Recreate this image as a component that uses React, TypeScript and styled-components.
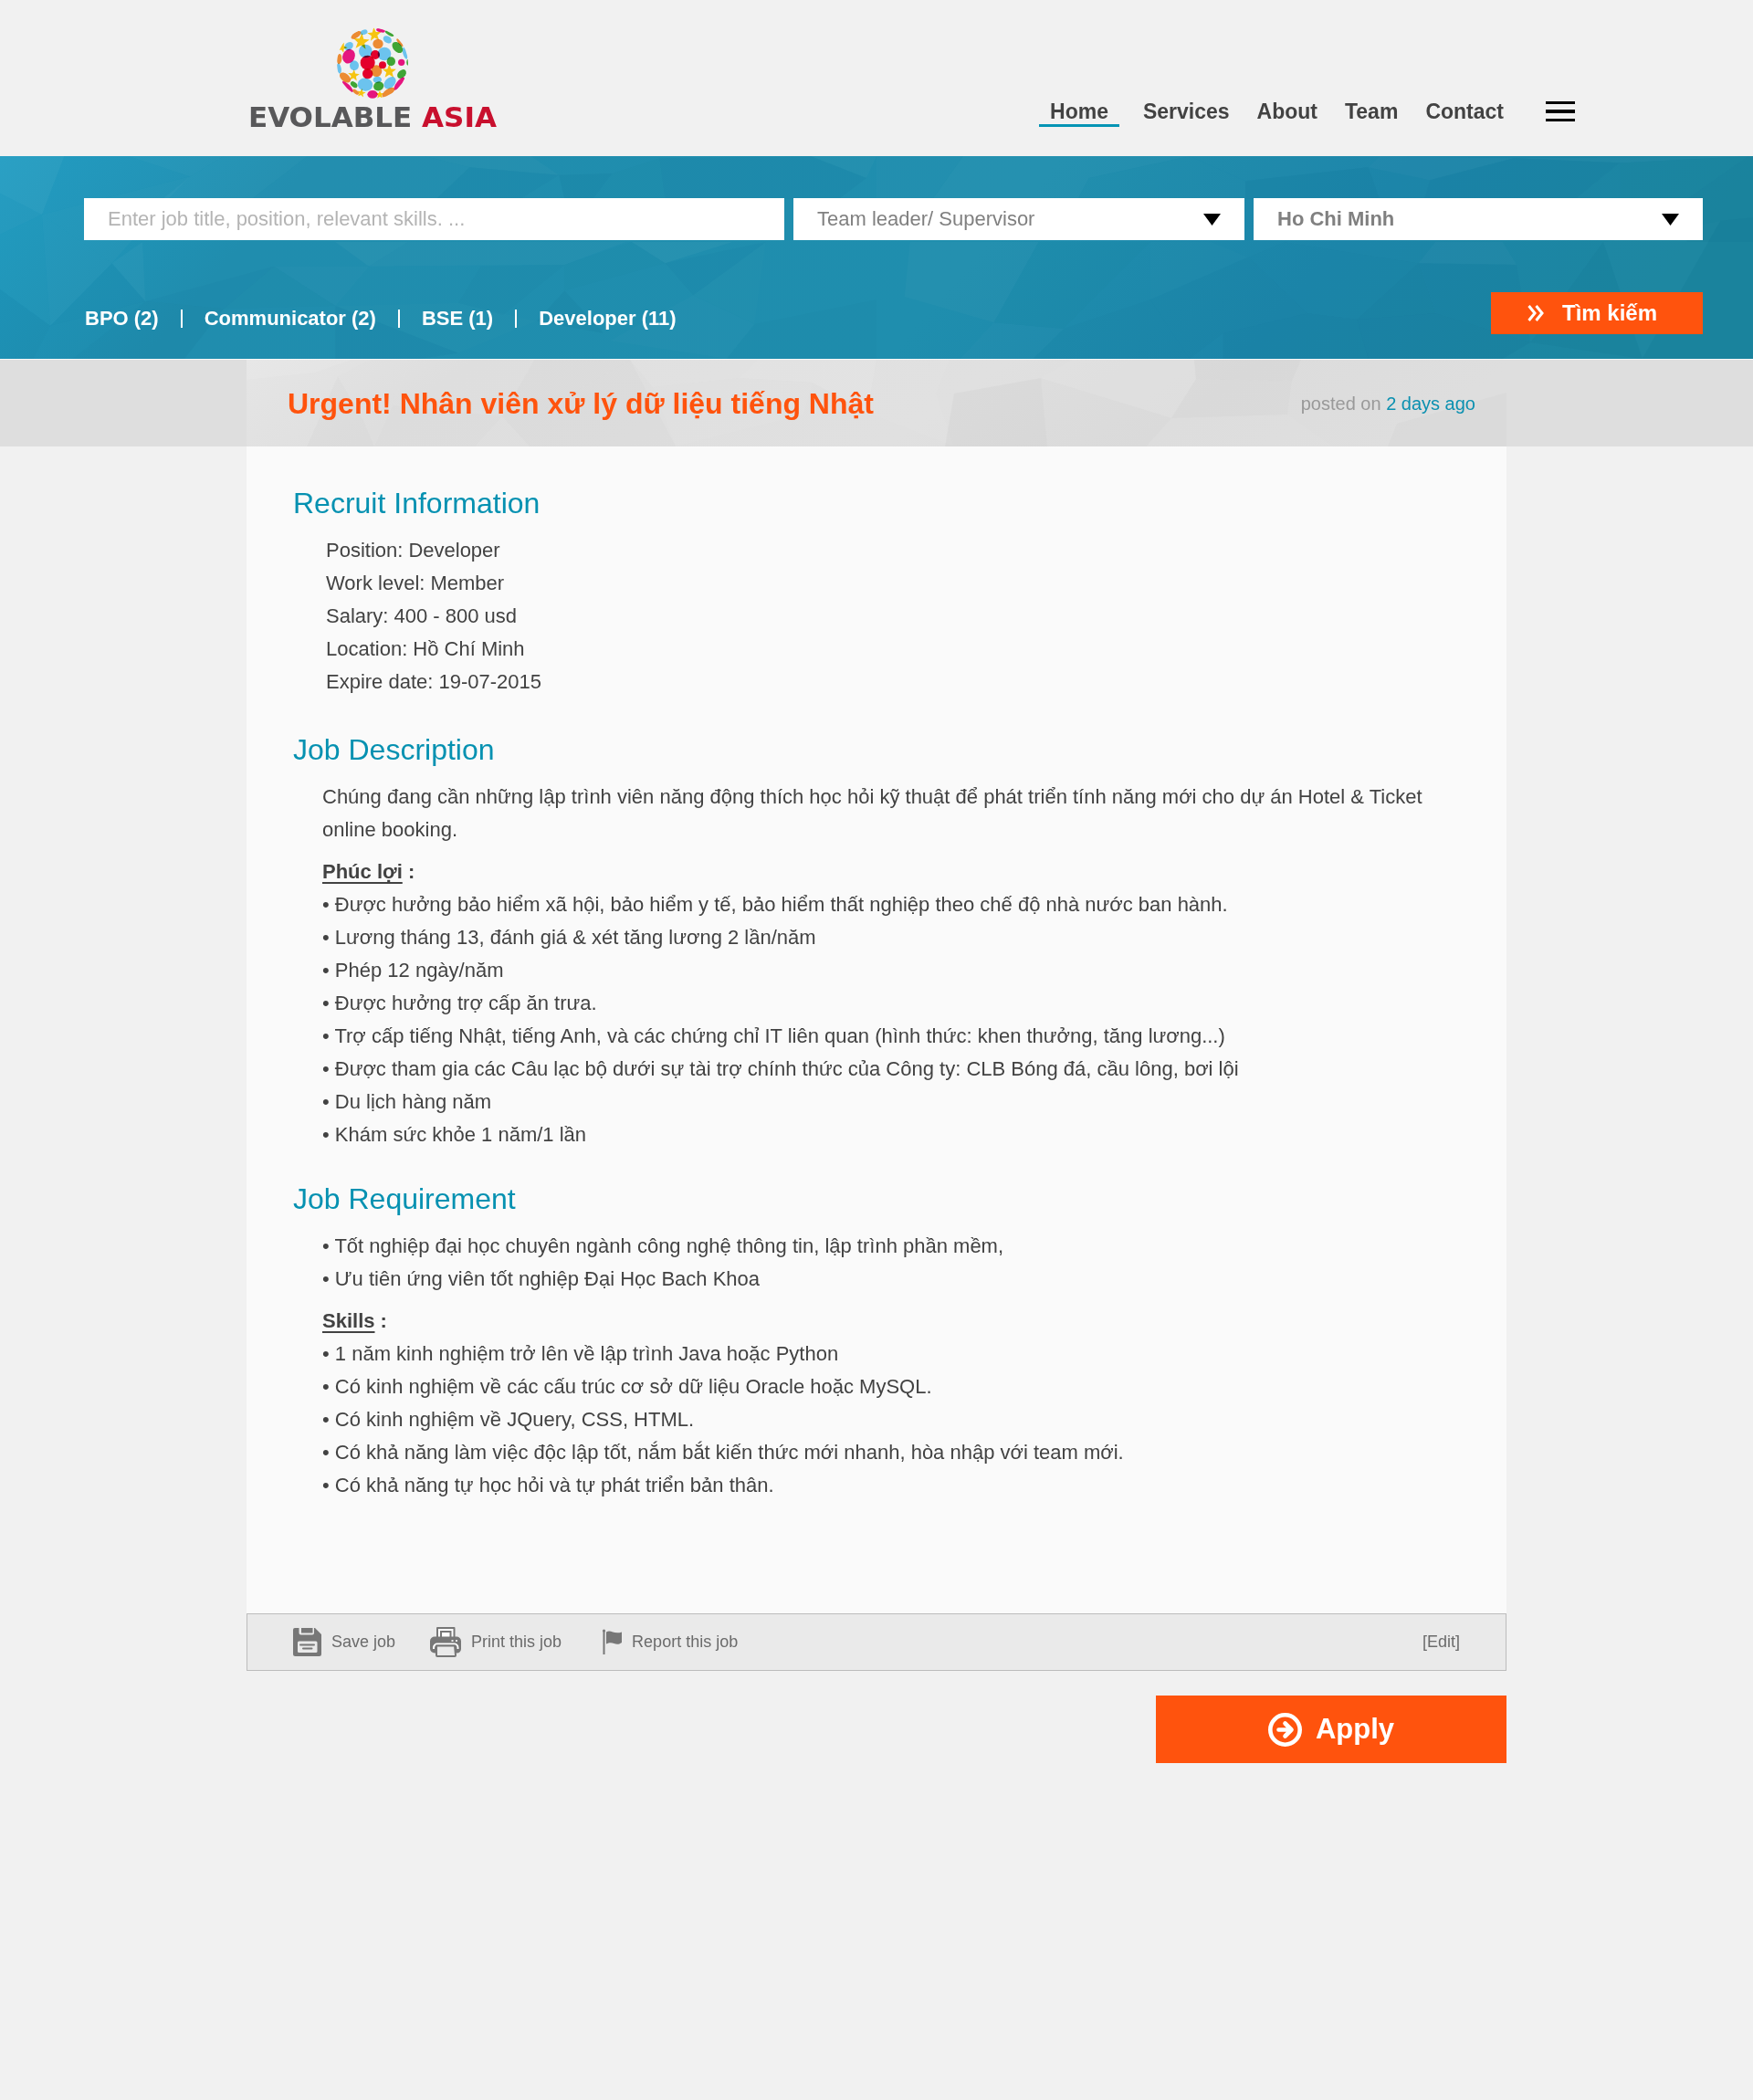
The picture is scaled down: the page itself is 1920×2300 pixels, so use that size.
import React from "react";
import styled, { createGlobalStyle } from "styled-components";

const GlobalStyle = createGlobalStyle`
  *, *::before, *::after { box-sizing: border-box; }
  body {
    margin: 0;
    background: #f1f1f1;
    color: #424242;
    font-family: "Liberation Sans", Arial, Helvetica, sans-serif;
    font-size: 22px;
    line-height: 36px;
  }
  h1, h2, h3, p, ul, dl, dd { margin: 0; padding: 0; }
  ul { list-style: none; }
  a { color: inherit; text-decoration: none; }
  button, input, select { font: inherit; border: 0; border-radius: 0; margin: 0; cursor: pointer; }
`;

/* ---------- header ---------- */

const Header = styled.header`
  display: flex;
  align-items: flex-end;
  justify-content: space-between;
  padding: 30px 195px 32px 272px;
`;

const Logo = styled.a`
  display: flex;
  flex-direction: column;
  align-items: center;
  gap: 8px;
`;

const Globe = styled.svg`
  width: 80px;
  height: 79px;
  isolation: isolate;

  g g > * { mix-blend-mode: multiply; }
`;

const Wordmark = styled.span`
  font: bold 31px/22px "DejaVu Sans", sans-serif;
  color: #58585a;
  white-space: nowrap;
`;

const WordmarkAccent = styled.span`
  color: #c8102e;
`;

const Nav = styled.nav`
  display: flex;
  align-items: flex-end;
  gap: 46px;
`;

const NavList = styled.ul`
  display: flex;
  gap: 30px;
`;

const NavLink = styled.a<{ $active?: boolean }>`
  display: block;
  padding: ${(p) => (p.$active ? "0 12px" : "0")};
  margin-right: ${(p) => (p.$active ? "-4px" : "0")};
  border-bottom: 3px solid ${(p) => (p.$active ? "#0494b4" : "transparent")};
  font-size: 23px;
  font-weight: bold;
  line-height: 28px;
`;

const MenuButton = styled.button`
  display: flex;
  align-items: center;
  width: 32px;
  height: 34px;
  padding: 0;
  background: none;
`;

/* ---------- faceted backdrop ---------- */

const Backdrop = styled.svg`
  position: absolute;
  inset: 0;
  width: 100%;
  height: 100%;
  z-index: -1;
`;

const FACETS: Array<[string, number]> = [
  ["0,18 115,18 75,210 0,140", 9],
  ["115,18 230,18 340,85 75,210", 3],
  ["230,18 400,18 340,85", 6],
  ["400,18 550,18 450,160 290,160 340,85", 5],
  ["340,85 75,210 200,370 300,160", 4],
  ["0,140 75,210 0,275", 5],
  ["75,210 0,275 0,455 90,575", 2],
  ["75,210 200,370 90,575", 4],
  ["200,370 255,300 260,495", 5],
  ["200,370 260,495 90,575", -4],
  ["90,575 260,495 130,684 60,684", -3],
  ["0,455 90,575 60,684 0,684", -5],
  ["260,300 455,300 490,380 260,495", 1],
  ["260,495 490,380 400,520", -4],
  ["260,495 400,520 330,684 130,684", -6],
  ["490,380 660,380 600,510", 3],
  ["490,380 600,510 400,520", -2],
  ["600,300 730,300 660,380", 6],
  ["550,18 760,18 840,55 780,160 450,160", 3],
  ["760,18 950,18 1000,80 840,55", 4],
  ["840,55 1000,80 930,160 780,160", -4],
  ["1000,80 1095,75 1060,160 1010,160", -7],
  ["1095,75 1180,25 1190,160 1060,160", -2],
  ["1180,25 1450,18 1550,90 1500,160 1190,160", -5],
  ["1450,18 1568,18 1550,90", 4],
  ["730,300 1120,300 1010,375 660,380", 4],
  ["660,380 860,380 820,500 600,510", 1],
  ["860,380 1010,375 900,540 820,500", -3],
  ["1130,300 1190,370 1010,460 1010,375", -2],
  ["1190,370 1310,300 1130,300", 6],
  ["1190,370 1370,300 1240,475", -4],
  ["1240,475 1350,570 1370,300", 2],
  ["1010,460 1080,600 960,560", -6],
  ["600,510 820,665 750,684 600,684", -5],
  ["820,500 960,560 820,665 600,510", 2],
  ["1090,625 1240,475 1350,570 1300,684", 3],
  ["1350,570 1568,490 1568,684 1300,684", -3],
  ["1370,300 1568,300 1568,490 1350,570", 1],
  ["1568,18 1723,18 1668,160 1568,160", 3],
  ["1723,18 2128,18 1948,90 1928,160 1668,160", 5],
  ["1948,90 2128,18 2228,100 2228,160 1928,160", 2],
  ["2228,100 2448,55 2468,160 2228,160", -6],
  ["2128,18 2468,18 2448,55 2228,100", 2],
  ["2448,55 2558,97 2708,25 2468,18", 4],
  ["2448,55 2558,97 2548,160 2468,160", 1],
  ["2558,97 2708,25 2898,40 2818,160 2548,160", -4],
  ["2708,25 3128,18 2898,40", 4],
  ["2898,40 3128,18 3018,160 2898,160", -2],
  ["3128,18 3136,18 3136,300 3018,300 3018,160", -6],
  ["1628,300 1858,300 1778,565 1618,480", 4],
  ["1568,490 1618,480 1778,565 1718,684 1568,684", 1],
  ["1778,565 1903,585 1848,684 1718,684", 3],
  ["1858,300 2058,300 1903,585 1778,565", -2],
  ["1903,585 2058,490 2128,684 1848,684", -3],
  ["2058,490 2233,350 2168,300 2058,300", 2],
  ["2233,350 2338,535 2188,600 2128,684 2058,490", -3],
  ["2233,350 2298,300 2538,370 2428,555 2338,535", -1],
  ["2538,370 2713,375 2688,300 2568,300", 4],
  ["2538,370 2428,555 2568,535", -5],
  ["2538,370 2713,375 2738,630 2568,535", -4],
  ["2338,535 2428,555 2448,684 2188,684 2188,600", -5],
  ["2428,555 2568,535 2738,630 2688,684 2448,684", -7],
  ["2713,375 2868,300 2738,630", 1],
  ["2738,630 2868,300 2938,684", -5],
  ["2868,300 3078,230 2938,684", 2],
  ["2938,684 3078,230 3136,220 3136,684", -5],
];

const SILVER_FACETS: Array<[string, number]> = [
  ["0,0 115,0 75,14 0,22", 6],
  ["115,0 135,0 100,18 75,14", 3],
  ["100,18 180,0 160,50 140,95 128,66", 1],
  ["0,22 75,14 100,18 66,95 0,95", 3],
  ["100,18 128,66 140,95 66,95", -2],
  ["315,0 420,0 330,52 280,62", -2],
  ["160,50 280,62 250,95 140,95", -1],
  ["330,52 420,0 470,95 310,95 280,62", -3],
  ["420,0 560,0 540,20 445,30", 4],
  ["445,30 540,20 620,25 610,60 470,95", 2],
  ["560,0 690,0 680,58 620,25 540,20", 5],
  ["690,0 770,0 755,37 775,95 680,58", 2],
  ["775,37 870,20 877,95 765,95", -5],
  ["870,20 905,0 1038,0 1040,21 1013,64", 3],
  ["870,20 1013,64 985,95 877,95", -1],
  ["1040,21 1145,23 1140,60 1013,64", -2],
  ["1038,0 1155,0 1145,23 1040,21", -4],
  ["1145,23 1155,0 1380,0 1380,36 1260,70", 1],
  ["1013,64 1140,60 1190,95 985,95", 2],
  ["1260,70 1380,36 1380,95 1250,95", -4],
];

type Tone = "ocean" | "silver";

const TONES = {
  ocean: { box: [0, 18, 3136, 666], stops: ["#1f9bc1", "#208dae", "#1f8eae", "#1c85a9", "#1c86a0"], dark: "#00507a", facets: FACETS },
  silver: { box: [0, 0, 1380, 95], stops: ["#e4e4e4", "#dedede", "#e0e0e0", "#dcdcdc", "#dedede"], dark: "#777", facets: SILVER_FACETS },
};

function Facets({ tone }: { tone: Tone }) {
  const { box, stops, dark, facets } = TONES[tone];
  return (
    <Backdrop viewBox={box.join(" ")} preserveAspectRatio="none" aria-hidden="true">
      <defs>
        <linearGradient id={tone} x1="0" y1="0" x2="1" y2="0.1">
          {stops.map((c, i) => (
            <stop key={i} offset={[0, 0.18, 0.6, 0.8, 1][i]} stopColor={c} />
          ))}
        </linearGradient>
      </defs>
      <rect y={box[1]} width={box[2]} height={box[3]} fill={`url(#${tone})`} />
      {facets.map(([points, shade]) => (
        <polygon
          key={points}
          points={points}
          fill={shade > 0 ? "#fff" : dark}
          fillOpacity={Math.abs(shade) / (tone === "silver" ? 50 * (shade > 0 ? 1 : 2) : shade > 0 ? 180 : 100)}
        />
      ))}
    </Backdrop>
  );
}

/* ---------- search band ---------- */

const SearchBand = styled.form`
  position: relative;
  z-index: 0;
  display: flex;
  flex-direction: column;
  gap: 57px;
  padding: 46px 55px 27px 92px;
`;

const Fields = styled.div`
  display: grid;
  grid-template-columns: 767fr 494fr 492fr;
  gap: 10px;
`;

const SearchInput = styled.input`
  width: 100%;
  height: 46px;
  padding: 0 26px;
  background: #fff;
  color: #424242;
  cursor: text;

  &::placeholder { color: #b4b4b4; opacity: 1; }
`;

const SelectBox = styled.div`
  display: grid;
  align-items: center;
  background: #fff;

  > * { grid-area: 1 / 1; }
  > svg { justify-self: end; margin-right: 26px; pointer-events: none; }
`;

const Select = styled.select<{ $strong?: boolean }>`
  appearance: none;
  width: 100%;
  height: 46px;
  padding: 0 26px;
  background: transparent;
  color: #808080;
  font-weight: ${(p) => (p.$strong ? "bold" : "normal")};
`;

const SearchFooter = styled.div`
  display: flex;
  align-items: flex-end;
  justify-content: space-between;
`;

const QuickLinks = styled.ul`
  display: flex;
  align-items: center;
  gap: 24px;
  padding-left: 1px;
  color: #fff;
  font-weight: bold;
  line-height: 34px;
`;

const QuickLink = styled.li`
  display: flex;
  align-items: center;
  gap: 24px;

  & + &::before {
    content: "";
    width: 2px;
    height: 20px;
    background: #fff;
  }
`;

const SearchButton = styled.button`
  display: flex;
  align-items: center;
  gap: 20px;
  width: 232px;
  height: 46px;
  padding: 0 0 0 40px;
  background: #ff530d;
  color: #fff;
  font-size: 24px;
  font-weight: bold;
`;

/* ---------- job title strip ---------- */

const TitleStrip = styled.div`
  background: #dedede;
  border-top: 1px solid #f8f8f8;
`;

const TitleInner = styled.div`
  position: relative;
  z-index: 0;
  display: flex;
  align-items: center;
  justify-content: space-between;
  max-width: 1380px;
  height: 95px;
  margin: 0 auto;
  padding: 0 34px 0 45px;
`;

const JobTitle = styled.h1`
  color: #ff530d;
  font-size: 32px;
`;

const Posted = styled.p`
  color: #999;
  font-size: 20px;
`;

const PostedTime = styled.time`
  color: #0b90b0;
`;

/* ---------- job details ---------- */

const Main = styled.main`
  max-width: 1380px;
  margin: 0 auto;
`;

const Card = styled.article`
  display: flex;
  flex-direction: column;
  gap: 34px;
  padding: 44px 50px 122px 51px;
  background: #fafafa;
`;

const Section = styled.section`
  display: flex;
  flex-direction: column;
  gap: 16px;
`;

const SectionTitle = styled.h2`
  color: #0591b1;
  font-size: 32px;
  font-weight: normal;
`;

const Facts = styled.dl`
  padding: 0 0 4px 36px;
`;

const Fact = styled.div`
  display: flex;
  gap: 6px;
`;

const Prose = styled.div`
  display: flex;
  flex-direction: column;
  gap: 10px;
  padding-left: 32px;
`;

const GroupTitle = styled.h3`
  font-size: 22px;

  > span {
    text-decoration: underline;
    text-decoration-thickness: 2px;
    text-underline-offset: 4px;
    text-decoration-skip-ink: none;
  }
`;

const Bullets = styled.ul`
  > li::before { content: "• "; }
`;

/* ---------- actions ---------- */

const ActionBar = styled.div`
  display: flex;
  align-items: center;
  justify-content: space-between;
  height: 63px;
  padding: 0 50px 2px 49px;
  background: #eaeaea;
  border: 1px solid #bcbcbc;
`;

const ActionGroup = styled.div`
  display: flex;
  align-items: center;
  gap: 38px;
`;

const Action = styled.button`
  display: flex;
  align-items: center;
  gap: 11px;
  padding: 0;
  background: none;
  color: #6b6b6b;
  font-size: 18px;
`;

const ApplyButton = styled.button`
  display: flex;
  align-items: center;
  justify-content: center;
  gap: 15px;
  width: 384px;
  height: 74px;
  margin: 27px 0 0 auto;
  background: #ff530d;
  color: #fff;
  font-size: 31px;
  font-weight: bold;
`;

/* ---------- drawings ---------- */

type Dot = [number, number, number, number, number];

const DOTS: Record<string, Dot[]> = {
  "#6cc3ee": [
    [457, 108, 22, 22, 0], [519, 117, 22, 22, 0], [420, 155, 15, 16, 0], [456, 218, 25, 21, 10],
    [537, 212, 23, 16, -45], [496, 202, 14, 11, 0], [529, 70, 15, 11, 35], [452, 46, 12, 8, -20],
    [402, 92, 16, 12, -40], [370, 165, 7, 17, -10], [587, 115, 7, 20, -15],
  ],
  "#ec8b33": [
    [498, 84, 17, 16, 0], [493, 173, 18, 19, 0], [426, 55, 19, 9, -35], [390, 195, 21, 13, 40],
    [532, 244, 24, 11, -35], [371, 134, 8, 17, 5], [570, 80, 16, 5, 50], [425, 242, 12, 6, 40],
  ],
  "#3fa535": [
    [562, 96, 21, 14, 48], [541, 142, 14, 15, 0], [576, 183, 17, 12, -45], [500, 223, 17, 15, -20],
    [536, 50, 16, 6, 30], [596, 145, 4, 10, 0], [419, 218, 13, 8, 40],
  ],
  "#e5157f": [
    [402, 125, 20, 24, 25], [575, 145, 11, 11, 0], [480, 250, 17, 13, 0], [398, 225, 24, 8, 45],
    [568, 215, 26, 9, -52], [507, 40, 15, 6, 12],
  ],
  "#e4002b": [[464, 146, 24, 24, 0], [489, 120, 15, 15, 0], [513, 154, 12, 12, 0], [464, 182, 17, 17, 0]],
};

const STARS: Array<[number, number, number, number]> = [
  [443, 77, 28, 5], [486, 54, 24, -5], [418, 188, 20, 5], [535, 175, 24, 0],
  [443, 246, 15, 10], [504, 251, 14, 0], [380, 96, 18, 20],
];

function starPoints(r: number) {
  return Array.from({ length: 10 }, (_, i) => {
    const radius = i % 2 ? r * 0.42 : r;
    const a = (Math.PI / 5) * i - Math.PI / 2;
    return `${(radius * Math.cos(a)).toFixed(1)},${(radius * Math.sin(a)).toFixed(1)}`;
  }).join(" ");
}

function GlobeMark() {
  return (
    <Globe viewBox="360 30 240 237" aria-hidden="true">
      <clipPath id="globe"><circle cx="480" cy="148.5" r="117" /></clipPath>
      <g clipPath="url(#globe)">
        <g>
          {STARS.map(([x, y, r, turn]) => (
            <polygon key={`${x}-${y}`} points={starPoints(r)} transform={`translate(${x} ${y}) rotate(${turn})`} fill="#f6c410" />
          ))}
          {Object.entries(DOTS).flatMap(([fill, dots]) =>
            dots.map(([x, y, rx, ry, turn]) => (
              <ellipse key={`${x}-${y}`} rx={rx} ry={ry} transform={`translate(${x} ${y}) rotate(${turn})`} fill={fill} />
            ))
          )}
        </g>
      </g>
    </Globe>
  );
}

const MenuIcon = () => (
  <svg width="32" height="22" aria-hidden="true">
    <path d="M0 0h32v3H0zM0 9h32v4H0zM0 19h32v3H0z" />
  </svg>
);

const ArrowDown = () => (
  <svg width="19" height="13" aria-hidden="true"><path d="M0 0h19L9.500 13z" /></svg>
);

const DoubleChevron = () => (
  <svg width="18" height="18" viewBox="0 0 18 18" fill="none" stroke="#fff" strokeWidth="3" aria-hidden="true">
    <path d="M1.500 1l6.500 8-6.500 8M9.500 1l6.500 8-6.500 8" />
  </svg>
);

const SaveIcon = () => (
  <svg width="32" height="32" viewBox="0 0 32 32" aria-hidden="true">
    <path fill="#777" d="M3 1h4.500v5.500a2 2 0 0 0 2 2h12.500a2 2 0 0 0 2-2V1h1l7 7v21.500a2.500 2.500 0 0 1-2.500 2.500h-26A2.500 2.500 0 0 1 1 29.500V3a2 2 0 0 1 2-2z" />
    <path fill="#777" d="M10 1h12.500v5.500H10z" />
    <rect x="6" y="15.500" width="21.500" height="12.500" rx="1.500" fill="#eaeaea" />
    <path stroke="#777" strokeWidth="2" strokeLinecap="round" d="M9 19.500h15M12 23.500h9.500" />
  </svg>
);

const PrintIcon = () => (
  <svg width="34" height="34" viewBox="0 0 34 34" aria-hidden="true">
    <path d="M8 13V2h18.500v11" fill="#fff" stroke="#777" strokeWidth="2" strokeLinejoin="round" />
    <path d="M12 12V6h10.500v6" fill="#fff" stroke="#777" strokeWidth="2" />
    <path d="M5 11.500h24a5 5 0 0 1 5 5v8.500a4.500 4.500 0 0 1-4.500 4.500H5A5 5 0 0 1 0 24.500v-8a5 5 0 0 1 5-5z" fill="#777" />
    <path d="M4 25v-1.500a4 4 0 0 1 4-4h18.500a4 4 0 0 1 4 4V25" fill="none" stroke="#fff" strokeWidth="2" />
    <path d="M7 21.500h20l1 10.500a1 1 0 0 1-1 1H8a1 1 0 0 1-1-1z" fill="#eaeaea" stroke="#777" strokeWidth="2" />
    <path d="M23.500 15h2v2h-2zM28 15h2v2h-2z" fill="#eaeaea" />
  </svg>
);

const FlagIcon = () => (
  <svg width="28" height="28" viewBox="0 0 28 28" fill="#777" aria-hidden="true">
    <circle cx="8.500" cy="2" r="1.500" />
    <path d="M7.500 2h2v26h-2zM11 3.500c5-3.500 8 3 17 0V15c-7 5-9-2.500-17 1.500z" />
  </svg>
);

const ApplyIcon = () => (
  <svg width="37" height="37" viewBox="0 0 37 37" fill="none" stroke="#fff" aria-hidden="true">
    <circle cx="18.500" cy="18.500" r="16.200" strokeWidth="4.600" />
    <path d="M11.500 18.500h14M18.500 11.500l7 7-7 7" strokeWidth="4.600" strokeLinecap="round" strokeLinejoin="round" />
  </svg>
);

/* ---------- content ---------- */

const NAV = ["Home", "Services", "About", "Team", "Contact"];
const CATEGORIES = ["BPO (2)", "Communicator (2)", "BSE (1)", "Developer (11)"];
const FACTS = [
  ["Position:", "Developer"],
  ["Work level:", "Member"],
  ["Salary:", "400 - 800 usd"],
  ["Location:", "Hồ Chí Minh"],
  ["Expire date:", "19-07-2015"],
];
const BENEFITS = [
  "Được hưởng bảo hiểm xã hội, bảo hiểm y tế, bảo hiểm thất nghiệp theo chế độ nhà nước ban hành.",
  "Lương tháng 13, đánh giá & xét tăng lương 2 lần/năm",
  "Phép 12 ngày/năm",
  "Được hưởng trợ cấp ăn trưa.",
  "Trợ cấp tiếng Nhật, tiếng Anh, và các chứng chỉ IT liên quan (hình thức: khen thưởng, tăng lương...)",
  "Được tham gia các Câu lạc bộ dưới sự tài trợ chính thức của Công ty: CLB Bóng đá, cầu lông, bơi lội",
  "Du lịch hàng năm",
  "Khám sức khỏe 1 năm/1 lần",
];
const REQUIREMENTS = [
  "Tốt nghiệp đại học chuyên ngành công nghệ thông tin, lập trình phần mềm,",
  "Ưu tiên ứng viên tốt nghiệp Đại Học Bach Khoa",
];
const SKILLS = [
  "1 năm kinh nghiệm trở lên về lập trình Java hoặc Python",
  "Có kinh nghiệm về các cấu trúc cơ sở dữ liệu Oracle hoặc MySQL.",
  "Có kinh nghiệm về JQuery, CSS, HTML.",
  "Có khả năng làm việc độc lập tốt, nắm bắt kiến thức mới nhanh, hòa nhập với team mới.",
  "Có khả năng tự học hỏi và tự phát triển bản thân.",
];

const BulletList = ({ items }: { items: string[] }) => (
  <Bullets>{items.map((item) => <li key={item}>{item}</li>)}</Bullets>
);

const Group = ({ title, items }: { title: string; items: string[] }) => (
  <div>
    <GroupTitle><span>{title}</span> :</GroupTitle>
    <BulletList items={items} />
  </div>
);

export default function App() {
  return (
    <>
      <GlobalStyle />
      <Header>
        <Logo href="#">
          <GlobeMark />
          <Wordmark>EVOLABLE <WordmarkAccent>ASIA</WordmarkAccent></Wordmark>
        </Logo>
        <Nav>
          <NavList>
            {NAV.map((name, i) => (
              <li key={name}><NavLink href="#" $active={i === 0}>{name}</NavLink></li>
            ))}
          </NavList>
          <MenuButton type="button" aria-label="Menu"><MenuIcon /></MenuButton>
        </Nav>
      </Header>

      <SearchBand onSubmit={(e: React.FormEvent) => e.preventDefault()}>
        <Facets tone="ocean" />
        <Fields>
          <SearchInput type="text" aria-label="Keywords" placeholder="Enter job title, position, relevant skills. ..." />
          <SelectBox>
            <Select aria-label="Level" defaultValue="lead">
              <option value="lead">Team leader/ Supervisor</option>
            </Select>
            <ArrowDown />
          </SelectBox>
          <SelectBox>
            <Select $strong aria-label="City" defaultValue="hcm">
              <option value="hcm">Ho Chi Minh</option>
            </Select>
            <ArrowDown />
          </SelectBox>
        </Fields>
        <SearchFooter>
          <QuickLinks>
            {CATEGORIES.map((name) => (
              <QuickLink key={name}><a href="#">{name}</a></QuickLink>
            ))}
          </QuickLinks>
          <SearchButton type="submit"><DoubleChevron />Tìm kiếm</SearchButton>
        </SearchFooter>
      </SearchBand>

      <TitleStrip>
        <TitleInner>
          <Facets tone="silver" />
          <JobTitle>Urgent! Nhân viên xử lý dữ liệu tiếng Nhật</JobTitle>
          <Posted>posted on <PostedTime>2 days ago</PostedTime></Posted>
        </TitleInner>
      </TitleStrip>

      <Main>
        <Card>
          <Section>
            <SectionTitle>Recruit Information</SectionTitle>
            <Facts>
              {FACTS.map(([term, value]) => (
                <Fact key={term}><dt>{term}</dt><dd>{value}</dd></Fact>
              ))}
            </Facts>
          </Section>
          <Section>
            <SectionTitle>Job Description</SectionTitle>
            <Prose>
              <p>
                Chúng đang cần những lập trình viên năng động thích học hỏi kỹ thuật để phát triển tính năng mới
                cho dự án Hotel &amp; Ticket online booking.
              </p>
              <Group title="Phúc lợi" items={BENEFITS} />
            </Prose>
          </Section>
          <Section>
            <SectionTitle>Job Requirement</SectionTitle>
            <Prose>
              <BulletList items={REQUIREMENTS} />
              <Group title="Skills" items={SKILLS} />
            </Prose>
          </Section>
        </Card>
        <ActionBar>
          <ActionGroup>
            <Action type="button"><SaveIcon />Save job</Action>
            <Action type="button"><PrintIcon />Print this job</Action>
            <Action type="button"><FlagIcon />Report this job</Action>
          </ActionGroup>
          <Action type="button">[Edit]</Action>
        </ActionBar>
        <ApplyButton type="button"><ApplyIcon />Apply</ApplyButton>
      </Main>
    </>
  );
}
